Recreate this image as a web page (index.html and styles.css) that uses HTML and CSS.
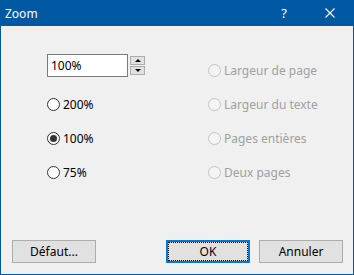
FILE: index.html
```html
<!DOCTYPE html>
<html lang="fr">

<head>
    <meta charset="UTF-8">
    <title>Zoom</title>
    <link rel="stylesheet" href="styles.css">
</head>

<body>
    <div class="window">
        <div class="titlebar">
            <span class="title">Zoom</span>
            <div class="caption-btns">
                <span class="cap-btn">?</span>
                <span class="cap-btn">
                    <svg width="10" height="10" viewBox="0 0 10 10">
                        <path d="M0.5 0.5 L9.5 9.5 M9.5 0.5 L0.5 9.5" stroke="#fff" stroke-width="1.1" fill="none" />
                    </svg>
                </span>
            </div>
        </div>
        <div class="client">
            <div class="options">
                <div class="col">
                    <div class="row row-field">
                        <div class="field">100%</div>
                        <div class="spin">
                            <span class="spin-btn"><i class="arrow up"></i></span>
                            <span class="spin-btn"><i class="arrow down"></i></span>
                        </div>
                    </div>
                    <div class="row"><span class="radio"></span>200%</div>
                    <div class="row"><span class="radio checked"></span>100%</div>
                    <div class="row"><span class="radio"></span>75%</div>
                </div>
                <div class="col disabled">
                    <div class="row"><span class="radio"></span>Largeur de page</div>
                    <div class="row"><span class="radio"></span>Largeur du texte</div>
                    <div class="row"><span class="radio"></span>Pages entières</div>
                    <div class="row"><span class="radio"></span>Deux pages</div>
                </div>
            </div>
            <div class="footer">
                <button class="btn">Défaut...</button>
                <div class="right-btns">
                    <button class="btn default">OK</button>
                    <button class="btn">Annuler</button>
                </div>
            </div>
        </div>
    </div>
</body>

</html>
```

FILE: styles.css
```css
body {
    margin: 0;
    font-family: "Noto Sans", sans-serif;
    font-size: 12px;
}

.window {
    width: 354px;
    height: 275px;
    box-sizing: border-box;
    background: #0058a3;
    padding: 0 1px 1px 1px;
    display: flex;
    flex-direction: column;
}

.titlebar {
    height: 26px;
    display: flex;
    align-items: center;
    justify-content: space-between;
    color: #fff;
}

.title {
    padding-left: 4px;
}

.caption-btns {
    display: flex;
    height: 100%;
}

.cap-btn {
    width: 46px;
    display: flex;
    align-items: center;
    justify-content: center;
    font-size: 13px;
}

.client {
    flex: 1;
    background: #f0f0f0;
    display: flex;
    flex-direction: column;
}

.options {
    display: grid;
    grid-template-columns: 161px 1fr;
    padding: 27px 0 0 46px;
}

.row {
    height: 34px;
    display: flex;
    align-items: center;
    color: #000;
}

.row-field {
    align-items: flex-start;
    padding-top: 1px;
    box-sizing: border-box;
}

.field {
    width: 81px;
    height: 23px;
    box-sizing: border-box;
    border: 1px solid #7a7a7a;
    background: #fff;
    padding-left: 3px;
    line-height: 21px;
}

.spin {
    display: flex;
    flex-direction: column;
    gap: 1px;
    margin: 2px 0 0 2px;
}

.spin-btn {
    width: 15px;
    height: 9px;
    box-sizing: border-box;
    border: 1px solid #adadad;
    background: #e1e1e1;
    display: flex;
    align-items: center;
    justify-content: center;
}

.arrow {
    width: 0;
    height: 0;
    border-left: 3px solid transparent;
    border-right: 3px solid transparent;
}

.arrow.up {
    border-bottom: 3px solid #000;
}

.arrow.down {
    border-top: 3px solid #000;
}

.radio {
    width: 13px;
    height: 13px;
    box-sizing: border-box;
    border: 1px solid #333;
    border-radius: 50%;
    background: #fff;
    margin-right: 3px;
    display: flex;
    align-items: center;
    justify-content: center;
}

.radio.checked::after {
    content: "";
    width: 7px;
    height: 7px;
    border-radius: 50%;
    background: #333;
}

.disabled .row {
    color: #a0a0a0;
}

.disabled .radio {
    border-color: #c4c4c4;
    background: #f4f4f4;
}

.footer {
    margin-top: auto;
    display: flex;
    justify-content: space-between;
    padding: 0 10px 11px 11px;
}

.right-btns {
    display: flex;
    gap: 9px;
}

.btn {
    width: 84px;
    height: 23px;
    border: 1px solid #adadad;
    background: #e1e1e1;
    font-family: inherit;
    font-size: 12px;
    color: #000;
    padding: 0;
}

.btn.default {
    border: 2px solid #0078d7;
    outline: 1px dotted #000;
    outline-offset: -3px;
}
```
